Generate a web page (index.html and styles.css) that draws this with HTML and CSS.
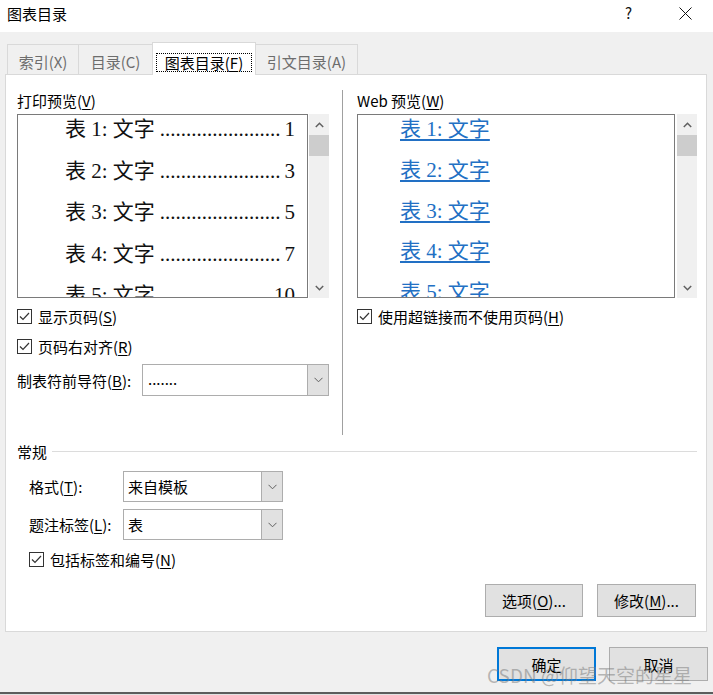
FILE: index.html
```html
<!DOCTYPE html>
<html lang="zh-CN">
<head>
<meta charset="utf-8">
<title>图表目录</title>
<link rel="stylesheet" href="styles.css">
</head>
<body>
<div class="window">
  <div class="titlebar">
    <span class="title">图表目录</span>
    <span class="help">?</span>
    <span class="close"><svg width="13" height="13" viewBox="0 0 13 13"><path d="M0.5 0.5L12.5 12.5M12.5 0.5L0.5 12.5" stroke="#111" stroke-width="1" fill="none"/></svg></span>
  </div>

  <div class="tabs">
    <div class="tab t1">索引(X)</div>
    <div class="tab t2">目录(C)</div>
    <div class="tab active"><span class="focus">图表目录(<u>F</u>)</span></div>
    <div class="tab t4">引文目录(A)</div>
  </div>

  <div class="panel">
    <div class="top">
      <div class="col left">
        <div class="label">打印预览(<u>V</u>)</div>
        <div class="preview">
          <div class="listbox lb-left">
            <div class="rows print">
              <div class="row"><span class="entry">表 1: 文字</span><span class="dots">.......................</span><span class="num">1</span></div>
              <div class="row"><span class="entry">表 2: 文字</span><span class="dots">.......................</span><span class="num">3</span></div>
              <div class="row"><span class="entry">表 3: 文字</span><span class="dots">.......................</span><span class="num">5</span></div>
              <div class="row"><span class="entry">表 4: 文字</span><span class="dots">.......................</span><span class="num">7</span></div>
              <div class="row"><span class="entry">表 5: 文字</span><span class="dots">.....................</span><span class="num">10</span></div>
            </div>
          </div>
          <div class="scrollbar">
            <div class="arrow"><svg width="9" height="6" viewBox="0 0 9 6"><polyline points="0.8,5 4.5,1.3 8.2,5" fill="none" stroke="#606060" stroke-width="1.5"/></svg></div>
            <div class="thumb"></div>
            <div class="track"></div>
            <div class="arrow"><svg width="9" height="6" viewBox="0 0 9 6"><polyline points="0.8,1 4.5,4.7 8.2,1" fill="none" stroke="#606060" stroke-width="1.5"/></svg></div>
          </div>
        </div>
        <div class="check first">
          <span class="box"><svg width="13" height="13" viewBox="0 0 13 13"><polyline points="2,6.5 5,9.5 11,3" fill="none" stroke="#333" stroke-width="1.2"/></svg></span>
          <span>显示页码(<u>S</u>)</span>
        </div>
        <div class="check">
          <span class="box"><svg width="13" height="13" viewBox="0 0 13 13"><polyline points="2,6.5 5,9.5 11,3" fill="none" stroke="#333" stroke-width="1.2"/></svg></span>
          <span>页码右对齐(<u>R</u>)</span>
        </div>
        <div class="field leader">
          <span class="flabel">制表符前导符(<u>B</u>):</span>
          <div class="select sel-leader">
            <span class="value dotsval">.......</span>
            <span class="drop"><svg width="9" height="6" viewBox="0 0 9 6"><polyline points="0.5,0.8 4.5,4.8 8.5,0.8" fill="none" stroke="#606060" stroke-width="1"/></svg></span>
          </div>
        </div>
      </div>

      <div class="divider"></div>

      <div class="col right">
        <div class="label">Web 预览(<u>W</u>)</div>
        <div class="preview">
          <div class="listbox lb-right">
            <div class="rows web">
              <div class="wrow"><span class="link">表 1: 文字</span></div>
              <div class="wrow"><span class="link">表 2: 文字</span></div>
              <div class="wrow"><span class="link">表 3: 文字</span></div>
              <div class="wrow"><span class="link">表 4: 文字</span></div>
              <div class="wrow"><span class="link">表 5: 文字</span></div>
            </div>
          </div>
          <div class="scrollbar sb-right">
            <div class="arrow"><svg width="9" height="6" viewBox="0 0 9 6"><polyline points="0.8,5 4.5,1.3 8.2,5" fill="none" stroke="#606060" stroke-width="1.5"/></svg></div>
            <div class="thumb"></div>
            <div class="track"></div>
            <div class="arrow"><svg width="9" height="6" viewBox="0 0 9 6"><polyline points="0.8,1 4.5,4.7 8.2,1" fill="none" stroke="#606060" stroke-width="1.5"/></svg></div>
          </div>
        </div>
        <div class="check first">
          <span class="box"><svg width="13" height="13" viewBox="0 0 13 13"><polyline points="2,6.5 5,9.5 11,3" fill="none" stroke="#333" stroke-width="1.2"/></svg></span>
          <span>使用超链接而不使用页码(<u>H</u>)</span>
        </div>
      </div>
    </div>

    <div class="group-head">
      <span>常规</span>
      <span class="rule"></span>
    </div>
    <div class="group-body">
      <div class="field g1">
        <span class="glabel">格式(<u>T</u>):</span>
        <div class="select sel-small">
          <span class="value">来自模板</span>
          <span class="drop"><svg width="9" height="6" viewBox="0 0 9 6"><polyline points="0.5,0.8 4.5,4.8 8.5,0.8" fill="none" stroke="#606060" stroke-width="1"/></svg></span>
        </div>
      </div>
      <div class="field g2">
        <span class="glabel">题注标签(<u>L</u>):</span>
        <div class="select sel-small">
          <span class="value">表</span>
          <span class="drop"><svg width="9" height="6" viewBox="0 0 9 6"><polyline points="0.5,0.8 4.5,4.8 8.5,0.8" fill="none" stroke="#606060" stroke-width="1"/></svg></span>
        </div>
      </div>
      <div class="check g3">
        <span class="box"><svg width="13" height="13" viewBox="0 0 13 13"><polyline points="2,6.5 5,9.5 11,3" fill="none" stroke="#333" stroke-width="1.2"/></svg></span>
        <span>包括标签和编号(<u>N</u>)</span>
      </div>
    </div>
    <div class="panel-buttons">
      <button class="btn">选项(<u>O</u>)...</button>
      <button class="btn">修改(<u>M</u>)...</button>
    </div>
  </div>

  <div class="footer">
    <button class="btn btn-ok">确定</button>
    <button class="btn">取消</button>
  </div>
  <div class="bottomline"></div>

  <div class="watermark">CSDN @仰望天空的星星</div>
</div>
</body>
</html>
```

FILE: styles.css
```css
* { box-sizing: border-box; }

html, body {
  margin: 0;
  padding: 0;
}

body {
  width: 713px;
  height: 695px;
  overflow: hidden;
  background: #f0f0f0;
  font-family: "Noto Sans CJK SC", "Noto Sans", sans-serif;
  font-size: 15px;
  color: #000;
}

u { text-decoration: underline; text-underline-offset: 2px; }

.window {
  position: relative;
  width: 713px;
  height: 695px;
}

/* title bar */
.titlebar {
  height: 32px;
  background: #fff;
  display: flex;
  align-items: flex-start;
}
.title {
  padding: 4px 0 0 7px;
  line-height: 20px;
  flex: 1;
}
.help {
  width: 10px;
  margin-top: 3px;
  line-height: 20px;
  font-size: 15px;
  color: #111;
}
.close {
  margin: 7px 21px 0 44px;
  height: 13px;
  display: flex;
}

/* tabs */
.tabs {
  height: 42px;
  display: flex;
  align-items: flex-end;
  padding-left: 7px;
}
.tab {
  height: 30px;
  border-top: 1px solid #d9d9d9;
  border-left: 1px solid #d9d9d9;
  text-align: center;
  padding-top: 5px;
  line-height: 24px;
  color: #6d6d6d;
}
.t1 { width: 71px; }
.t2 { width: 74px; }
.t4 { width: 102px; border-right: 1px solid #d9d9d9; border-left: none; }
.tab.active {
  width: 104px;
  height: 33px;
  margin-bottom: -1px;
  background: #fff;
  border-right: 1px solid #d9d9d9;
  position: relative;
  z-index: 1;
  color: #000;
  padding-top: 10px;
  line-height: 17px;
}
.focus {
  display: inline-block;
  border: 1px dotted #000;
  padding: 0 8px;
  height: 19px;
  line-height: 17px;
}

/* panel */
.panel {
  margin: 0 6px 0 5px;
  height: 558px;
  background: #fff;
  border: 1px solid #d9d9d9;
  padding: 15px 9px 0 11px;
}

.top {
  display: flex;
  height: 345px;
}
.col.left { width: 312px; }
.col.right { width: 340px; }
.divider {
  width: 1px;
  background: #a0a0a0;
  margin: 0 14px 0 13px;
}

.label {
  height: 22px;
  line-height: 22px;
  margin-bottom: 2px;
}

.preview {
  display: flex;
  height: 184px;
}
.listbox {
  border: 1px solid #7a7a7a;
  background: #fff;
  overflow: hidden;
}
.lb-left { width: 291px; margin-right: 1px; }
.lb-right { width: 318px; margin-right: 2px; }

.scrollbar {
  width: 20px;
  background: #f0f0f0;
  display: flex;
  flex-direction: column;
}
.arrow {
  height: 21px;
  display: flex;
  align-items: center;
  justify-content: center;
}
.thumb {
  height: 21px;
  background: #cdcdcd;
}
.track { flex: 1; }

.rows {
  margin-top: -6px;
  font-family: "Liberation Serif", "Noto Sans CJK SC", serif;
  font-size: 21px;
}
.row {
  height: 41.5px;
  line-height: 41.5px;
  display: flex;
  white-space: nowrap;
  padding: 0 12px 0 47px;
  color: #111;
}
.entry { flex: none; }
.dots {
  flex: none;
  margin-left: 5px;
}
.num {
  flex: none;
  margin-left: auto;
}

.wrow {
  height: 40.75px;
  line-height: 40.75px;
  padding-left: 42px;
  white-space: nowrap;
}
.link {
  color: #2270c4;
  text-decoration: underline;
  text-underline-offset: 3px;
}

/* checkboxes */
.check {
  height: 30px;
  display: flex;
  align-items: center;
}
.check.first { margin-top: 3px; }
.box {
  width: 15px;
  height: 15px;
  border: 1px solid #333;
  background: #fff;
  margin-right: 6px;
  display: flex;
  align-items: center;
  justify-content: center;
  flex: none;
}

/* fields */
.field {
  display: flex;
  align-items: center;
}
.leader { margin-top: 3px; height: 32px; }
.flabel { width: 125px; }
.select {
  display: flex;
  border: 1px solid #adadad;
  background: #fff;
}
.sel-leader { width: 187px; height: 32px; }
.value {
  flex: 1;
  padding-left: 4px;
  display: flex;
  align-items: center;
}
.dotsval { padding-left: 5px; padding-bottom: 3px; }
.drop {
  width: 21px;
  background: #e1e1e1;
  border-left: 1px solid #adadad;
  display: flex;
  align-items: center;
  justify-content: center;
}

/* group */
.group-head {
  margin-top: 6px;
  height: 20px;
  display: flex;
  align-items: center;
}
.rule {
  flex: 1;
  height: 1px;
  background: #dcdcdc;
  margin-left: 5px;
}
.group-body { padding-left: 12px; }
.glabel { width: 94px; }
.sel-small { width: 160px; height: 31px; }
.g1 { margin-top: 10px; }
.g2 { margin-top: 7px; }
.g3 { margin-top: 4px; }

.panel-buttons {
  margin-top: 10px;
  display: flex;
  justify-content: flex-end;
  gap: 14px;
  padding-right: 1px;
}

.btn {
  font-family: inherit;
  font-size: 15px;
  color: #000;
  background: #e1e1e1;
  border: 1px solid #adadad;
  padding: 0;
  margin: 0;
  height: 33px;
  width: 98px;
}
.panel-buttons .btn:last-child { width: 99px; }

.footer {
  height: 60px;
  padding: 15px 5px 0 0;
  display: flex;
  justify-content: flex-end;
  gap: 13px;
}
.footer .btn { height: 34px; width: 99px; }
.footer .btn-ok { border: 2px solid #0078d7; }

.bottomline {
  height: 3px;
  border-top: 2px solid #5c5c5c;
  background: #e2e2e2;
}

.watermark {
  position: absolute;
  left: 487px;
  top: 663px;
  font-size: 19px;
  line-height: 24px;
  color: rgba(120, 120, 120, 0.5);
  white-space: nowrap;
  pointer-events: none;
}
```
